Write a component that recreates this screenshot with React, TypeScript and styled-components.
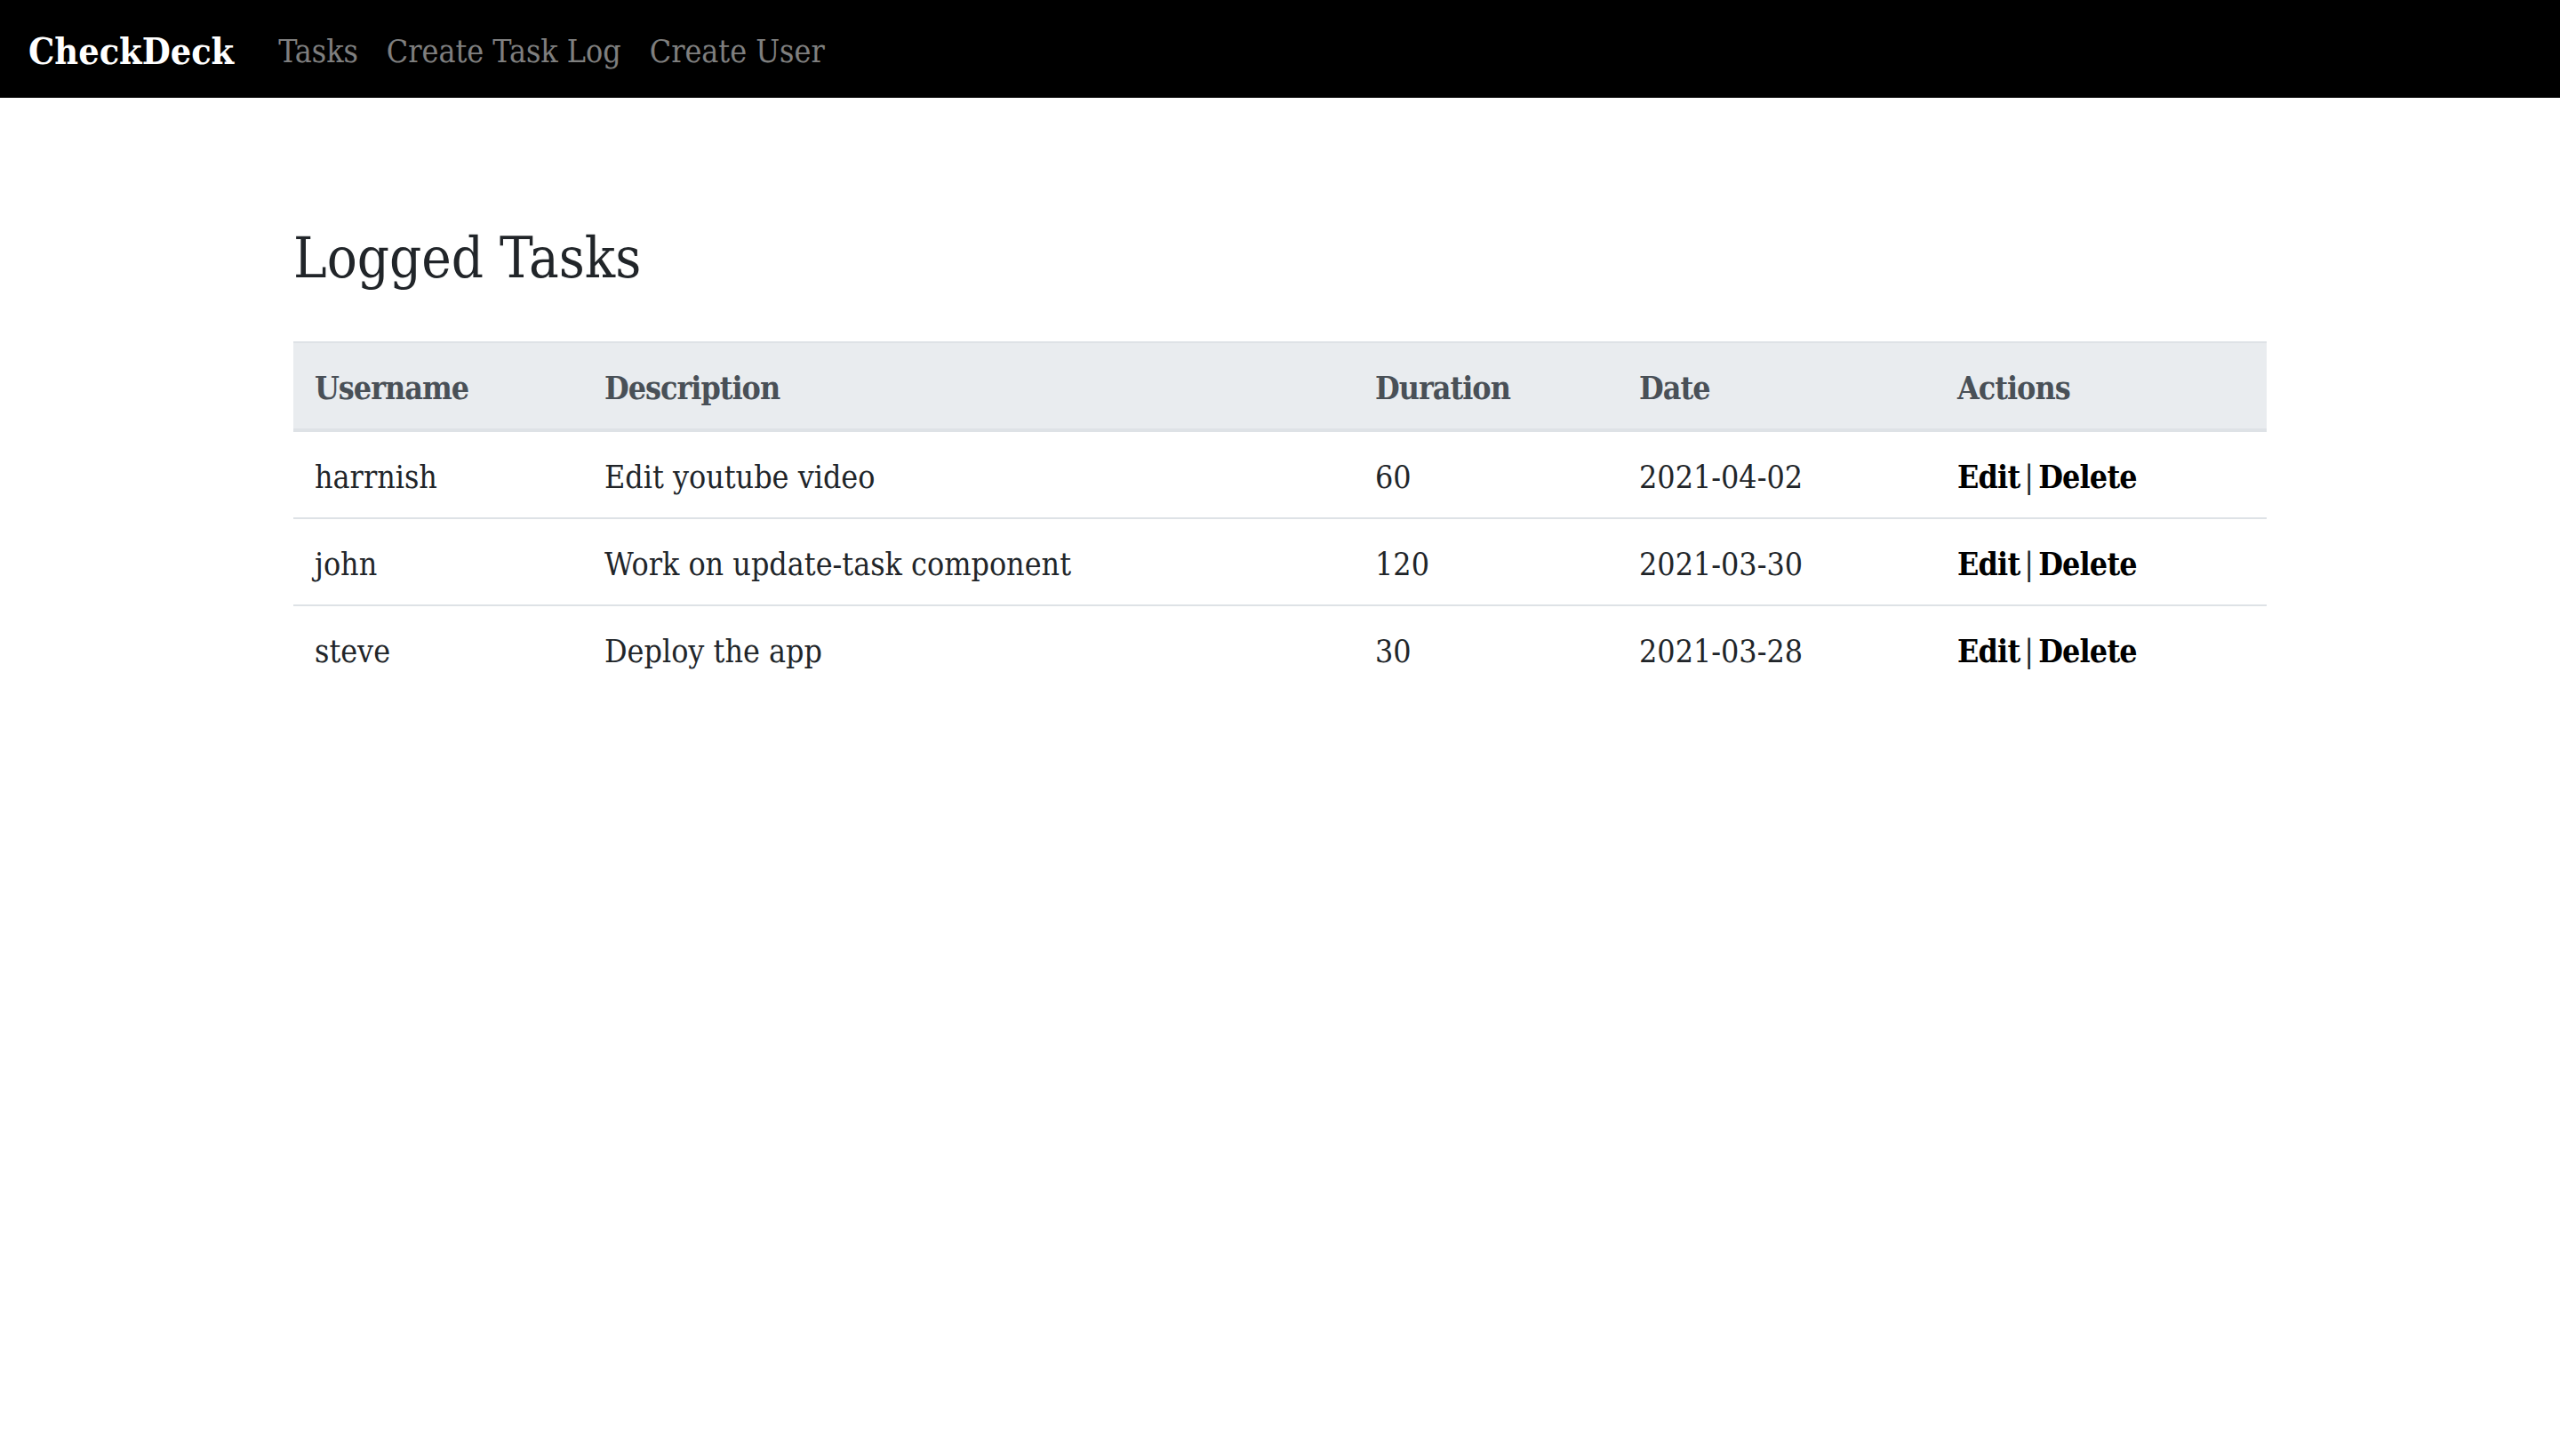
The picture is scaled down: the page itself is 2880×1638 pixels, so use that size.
import React from "react";
import styled, { createGlobalStyle } from "styled-components";

const GlobalStyle = createGlobalStyle`
  html, body {
    margin: 0;
    padding: 0;
    background: #ffffff;
  }
  body {
    font-family: "DejaVu Serif Condensed", "DejaVu Serif", serif;
    font-size: 35.5px;
    line-height: 1.5;
    color: #212529;
  }
  * { box-sizing: border-box; }
`;

const NavBar = styled.nav`
  display: flex;
  align-items: center;
  height: 110px;
  padding: 6px 32px 0;
  background: #000000;
`;

const Brand = styled.a`
  font-size: 41px;
  font-weight: 700;
  line-height: 60px;
  color: #ffffff;
  text-decoration: none;
  margin-right: 34px;
  white-space: nowrap;
`;

const NavList = styled.ul`
  display: flex;
  align-items: center;
  list-style: none;
  margin: 0;
  padding: 0;
`;

const NavLink = styled.a`
  display: block;
  padding: 0 16px;
  line-height: 48px;
  color: rgba(255, 255, 255, 0.5);
  text-decoration: none;
  white-space: nowrap;
`;

const Container = styled.main`
  max-width: 2280px;
  margin: 0 auto;
  padding: 0 30px;
`;

const Heading = styled.h3`
  font-size: 63px;
  font-weight: 400;
  line-height: 1.2;
  margin: 143px 0 55px;
  color: #212529;
`;

const Table = styled.table`
  width: 100%;
  table-layout: fixed;
  border-collapse: collapse;
  color: #212529;
`;

const HeadCell = styled.th`
  text-align: left;
  vertical-align: bottom;
  padding: 27px 24px 21px;
  line-height: 48px;
  font-weight: 700;
  letter-spacing: -1px;
  color: #495057;
  background: #e9ecef;
  border-top: 2px solid #dee2e6;
  border-bottom: 4px solid #dee2e6;
  white-space: nowrap;
`;

const Row = styled.tr`
  & + & > td {
    border-top: 2px solid #dee2e6;
  }
`;

const Cell = styled.td`
  padding: 27px 24px 21px;
  line-height: 48px;
  vertical-align: top;
  white-space: nowrap;
`;

const ActionLink = styled.a`
  font-weight: 700;
  color: #000000;
  text-decoration: none;
  letter-spacing: -0.8px;
`;

const Divider = styled.span`
  margin: 0 5px;
  font-weight: 400;
`;

type Task = { user: string; description: string; duration: number; date: string };

const tasks: Task[] = [
  { user: "harrnish", description: "Edit youtube video", duration: 60, date: "2021-04-02" },
  { user: "john", description: "Work on update-task component", duration: 120, date: "2021-03-30" },
  { user: "steve", description: "Deploy the app", duration: 30, date: "2021-03-28" },
];

const columns = [
  { label: "Username", width: 326 },
  { label: "Description", width: 867 },
  { label: "Duration", width: 297 },
  { label: "Date", width: 358 },
  { label: "Actions", width: 372 },
];

export default function App() {
  return (
    <>
      <GlobalStyle />
      <NavBar>
        <Brand href="#">CheckDeck</Brand>
        <NavList>
          <li><NavLink href="#">Tasks</NavLink></li>
          <li><NavLink href="#">Create Task Log</NavLink></li>
          <li><NavLink href="#">Create User</NavLink></li>
        </NavList>
      </NavBar>
      <Container>
        <Heading>Logged Tasks</Heading>
        <Table>
          <colgroup>
            {columns.map((c) => (
              <col key={c.label} style={{ width: c.width }} />
            ))}
          </colgroup>
          <thead>
            <tr>
              {columns.map((c) => (
                <HeadCell key={c.label}>{c.label}</HeadCell>
              ))}
            </tr>
          </thead>
          <tbody>
            {tasks.map((t) => (
              <Row key={t.user}>
                <Cell>{t.user}</Cell>
                <Cell>{t.description}</Cell>
                <Cell>{t.duration}</Cell>
                <Cell>{t.date}</Cell>
                <Cell>
                  <ActionLink href="#">Edit</ActionLink>
                  <Divider>|</Divider>
                  <ActionLink href="#">Delete</ActionLink>
                </Cell>
              </Row>
            ))}
          </tbody>
        </Table>
      </Container>
    </>
  );
}
